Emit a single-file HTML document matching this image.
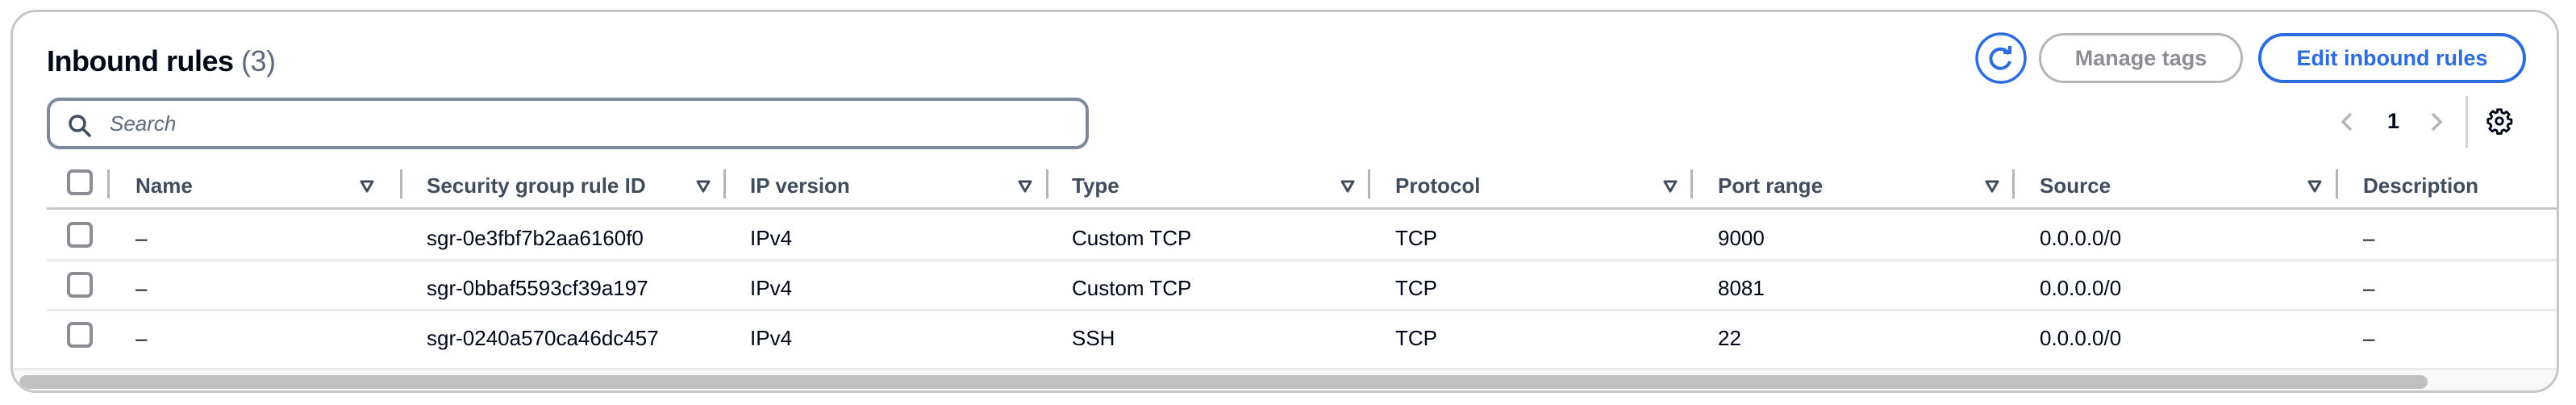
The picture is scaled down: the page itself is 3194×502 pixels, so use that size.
<!DOCTYPE html>
<html><head><meta charset="utf-8"><style>
*{box-sizing:border-box;margin:0;padding:0}
body{width:3194px;height:502px;background:#fff;font-family:"Liberation Sans",sans-serif;position:relative;overflow:hidden;color:#000716}
.card{position:absolute;left:13px;top:12px;width:3160px;height:475px;border:3px solid #c6c6cd;border-radius:32px;overflow:hidden}
.abs{position:absolute;white-space:nowrap}
.h1{left:42px;top:40px;font-size:36px;font-weight:bold;color:#000716;letter-spacing:-0.5px}
.h1 span{font-weight:normal;color:#5f6b7a}
.search{left:42px;top:106px;width:1292px;height:64px;border:4px solid #7d8998;border-radius:16px}
.search .t{position:absolute;left:74px;top:13px;font-size:26px;font-style:italic;color:#5f6b7a}
.btn{border-radius:34px;height:62px;top:26px;font-size:27px;font-weight:bold;text-align:center;line-height:56px}
.mt{left:2512px;width:253px;border:3px solid #b4b4bb;color:#8d8d94}
.ed{left:2784px;width:332px;border:4px solid #2c6cde;color:#2c6cde;line-height:54px}
.th{top:200px;font-size:26px;font-weight:bold;color:#414d5c}
.cb{width:32px;height:32px;border:4px solid #8c8c94;border-radius:7px;left:67px}
.td{font-size:26px;color:#000716}
.line{left:42px;right:0;height:3px;background:#e9ebed}
.r1{top:265px}.r2{top:327px}.r3{top:389px}
</style></head><body>
<div class="card">
<div class="abs h1">Inbound rules <span>(3)</span></div>
<div class="abs search">
<svg style="position:absolute;left:22px;top:16px" width="30" height="30" viewBox="0 0 30 30"><circle cx="12" cy="12" r="9" fill="none" stroke="#414d5c" stroke-width="3.5"/><path d="M18.5 18.5 L27 27" stroke="#414d5c" stroke-width="3.5" stroke-linecap="round"/></svg>
<div class="t">Search</div></div>
<svg class="abs" style="left:2432px;top:24px" width="66" height="66" viewBox="0 0 66 66"><circle cx="33" cy="33" r="30" fill="none" stroke="#2c6cde" stroke-width="3.5"/><path d="M43 28 A12 12 0 1 0 44 37" fill="none" stroke="#2c6cde" stroke-width="4"/><path d="M36 26 H44 V18" fill="none" stroke="#2c6cde" stroke-width="4"/></svg>
<div class="abs btn mt">Manage tags</div>
<div class="abs btn ed">Edit inbound rules</div>
<svg class="abs" style="left:2886px;top:124px" width="16" height="24" viewBox="0 0 16 24"><path d="M13 2 L3 12 L13 22" fill="none" stroke="#b4b4bb" stroke-width="3.5"/></svg>
<div class="abs" style="left:2944px;top:120px;font-size:27px;font-weight:bold">1</div>
<svg class="abs" style="left:2997px;top:124px" width="16" height="24" viewBox="0 0 16 24"><path d="M3 2 L13 12 L3 22" fill="none" stroke="#b4b4bb" stroke-width="3.5"/></svg>
<div class="abs" style="left:3041px;top:104px;width:3px;height:64px;background:#d1d5db"></div>
<svg class="abs" style="left:3066px;top:118px" width="34" height="34" viewBox="0 0 24 24"><path d="M10.3 2h3.4l.5 2.6 1.8.8 2.2-1.5 2.4 2.4-1.5 2.2.8 1.8 2.6.5v3.4l-2.6.5-.8 1.8 1.5 2.2-2.4 2.4-2.2-1.5-1.8.8-.5 2.6h-3.4l-.5-2.6-1.8-.8-2.2 1.5-2.4-2.4 1.5-2.2-.8-1.8L2 13.7v-3.4l2.6-.5.8-1.8-1.5-2.2 2.4-2.4 2.2 1.5 1.8-.8z" fill="none" stroke="#000716" stroke-width="2" stroke-linejoin="round"/><circle cx="12" cy="12" r="3" fill="none" stroke="#000716" stroke-width="2"/></svg>

<div class="abs cb" style="top:195px"></div>
<div class="abs th" style="left:152px">Name</div>
<div class="abs th" style="left:513px">Security group rule ID</div>
<div class="abs th" style="left:914px">IP version</div>
<div class="abs th" style="left:1313px">Type</div>
<div class="abs th" style="left:1714px">Protocol</div>
<div class="abs th" style="left:2114px">Port range</div>
<div class="abs th" style="left:2513px">Source</div>
<div class="abs th" style="left:2914px">Description</div>

<div class="abs line" style="top:242px;background:#c6c6cd"></div>
<div class="abs line" style="top:306px"></div>
<div class="abs line" style="top:368px"></div>
<div class="abs line" style="top:441px;left:0"></div>
<div class="abs" style="left:0;top:444px;width:3160px;height:30px;background:#f8f8f8"></div>
<div class="abs" style="left:8px;top:450px;width:2986px;height:17px;background:#c1c1c1;border-radius:9px"></div>

<div class="abs cb" style="top:260px"></div>
<div class="abs cb" style="top:322px"></div>
<div class="abs cb" style="top:384px"></div>

<div class="abs td r1" style="left:152px">–</div><div class="abs td r1" style="left:513px">sgr-0e3fbf7b2aa6160f0</div><div class="abs td r1" style="left:914px">IPv4</div><div class="abs td r1" style="left:1313px">Custom TCP</div><div class="abs td r1" style="left:1714px">TCP</div><div class="abs td r1" style="left:2114px">9000</div><div class="abs td r1" style="left:2513px">0.0.0.0/0</div><div class="abs td r1" style="left:2914px">–</div>
<div class="abs td r2" style="left:152px">–</div><div class="abs td r2" style="left:513px">sgr-0bbaf5593cf39a197</div><div class="abs td r2" style="left:914px">IPv4</div><div class="abs td r2" style="left:1313px">Custom TCP</div><div class="abs td r2" style="left:1714px">TCP</div><div class="abs td r2" style="left:2114px">8081</div><div class="abs td r2" style="left:2513px">0.0.0.0/0</div><div class="abs td r2" style="left:2914px">–</div>
<div class="abs td r3" style="left:152px">–</div><div class="abs td r3" style="left:513px">sgr-0240a570ca46dc457</div><div class="abs td r3" style="left:914px">IPv4</div><div class="abs td r3" style="left:1313px">SSH</div><div class="abs td r3" style="left:1714px">TCP</div><div class="abs td r3" style="left:2114px">22</div><div class="abs td r3" style="left:2513px">0.0.0.0/0</div><div class="abs td r3" style="left:2914px">–</div>
<svg class="abs" style="left:0;top:0" width="3160" height="260">
<g fill="none" stroke="#414d5c" stroke-width="3" stroke-linejoin="round">
<path d="M432 210 h14 l-7 12z"/><path d="M849 210 h14 l-7 12z"/><path d="M1248 210 h14 l-7 12z"/><path d="M1648 210 h14 l-7 12z"/><path d="M2048 210 h14 l-7 12z"/><path d="M2447 210 h14 l-7 12z"/><path d="M2847 210 h14 l-7 12z"/>
</g>
<g fill="#b4b4bb"><rect x="117" y="195" width="3" height="36"/><rect x="480" y="195" width="3" height="36"/><rect x="881" y="195" width="3" height="36"/><rect x="1281" y="195" width="3" height="36"/><rect x="1680" y="195" width="3" height="36"/><rect x="2080" y="195" width="3" height="36"/><rect x="2479" y="195" width="3" height="36"/><rect x="2880" y="195" width="3" height="36"/></g>
</svg>
</div>
</body></html>
